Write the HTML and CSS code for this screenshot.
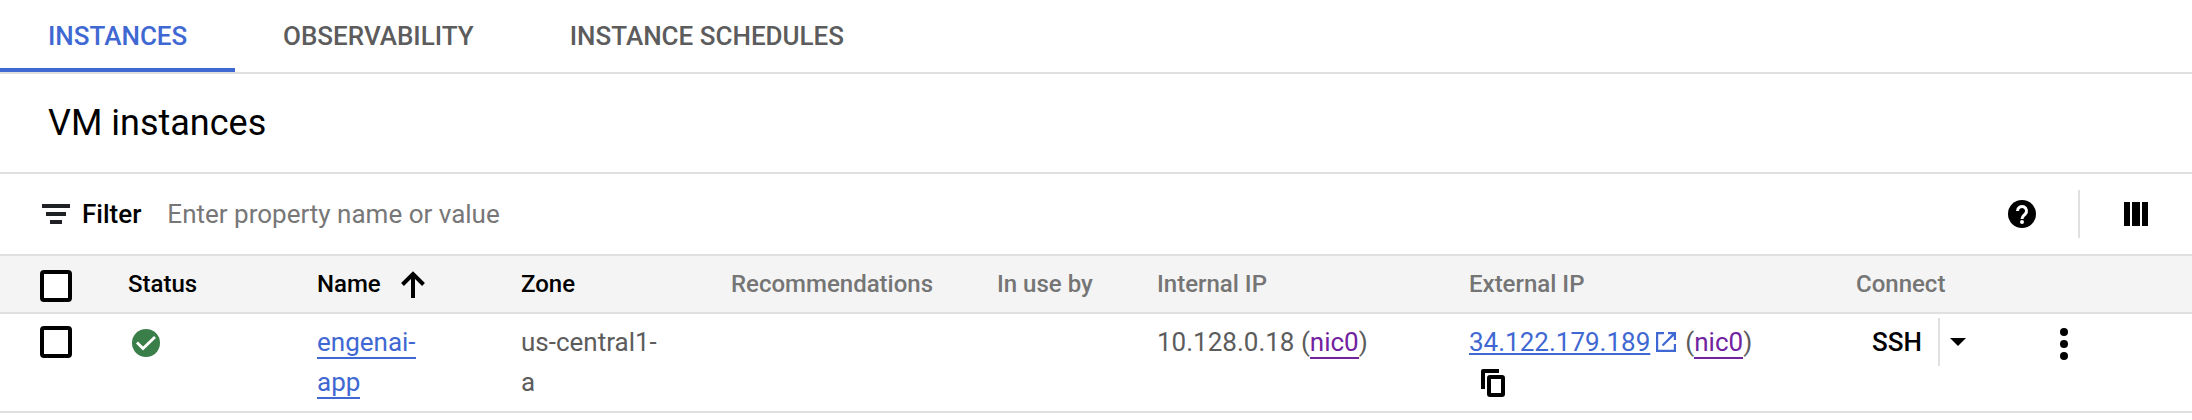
FILE: index.html
```html
<!DOCTYPE html>
<html lang="en">
<head>
<meta charset="utf-8">
<title>VM instances</title>
<link rel="stylesheet" href="styles.css">
</head>
<body>
<nav class="tabs">
  <a class="tab tab-active">INSTANCES</a>
  <a class="tab">OBSERVABILITY</a>
  <a class="tab">INSTANCE SCHEDULES</a>
</nav>
<header class="title-bar"><h1 class="title">VM instances</h1></header>
<section class="filter-bar">
  <svg class="filter-icon" width="28" height="20" viewBox="0 0 28 20"><path fill="#202124" d="M0 0h28v4H0zM4 8h20v4H4zM8 16h12v4H8z"/></svg>
  <span class="filter-label">Filter</span>
  <span class="filter-hint">Enter property name or value</span>
  <svg class="help" width="28" height="28" viewBox="0 0 28 28"><circle cx="14" cy="14" r="14"/><path fill="none" stroke="#fff" stroke-width="3" d="M9.500 11a4.500 4.500 0 1 1 7.700 3.100C15.300 16 14 16.500 14 19"/><circle cx="14" cy="22" r="2" fill="#fff"/></svg>
  <span class="divider"></span>
  <svg class="columns" width="24" height="24" viewBox="0 0 24 24"><path d="M0 0h6v24H0zM8 0h8v24H8zM18 0h6v24h-6z"/></svg>
</section>
<main class="table">
  <div class="row head">
    <div><span class="checkbox"></span></div>
    <div class="strong">Status</div>
    <div class="strong name-head">Name <svg class="sort" width="24" height="27" viewBox="0 0 24 27"><path fill="none" stroke="#000" stroke-width="4" d="M12 27V3M1.500 13.500 12 3l10.500 10.500"/></svg></div>
    <div class="strong">Zone</div>
    <div>Recommendations</div>
    <div>In use by</div>
    <div>Internal IP</div>
    <div>External IP</div>
    <div>Connect</div>
    <div></div>
  </div>
  <div class="row body">
    <div><span class="checkbox"></span></div>
    <div><svg class="status" width="28" height="28" viewBox="0 0 28 28"><circle cx="14" cy="14" r="14" fill="#3a7f4a"/><path fill="none" stroke="#fff" stroke-width="2.800" d="M5 13.500l6 6L23 8"/></svg></div>
    <div><a class="link">engenai-<br>app</a></div>
    <div>us-central1-<br>a</div>
    <div></div>
    <div></div>
    <div>10.128.0.18 (<a class="link visited">nic0</a>)</div>
    <div><a class="ip">34.122.179.189</a><svg class="open" width="20" height="20" viewBox="0 0 20 20"><path fill="none" stroke="#3f68d3" stroke-width="2.200" d="M8 1.100H1.100v17.800h17.800V12M12 1.100h6.900V8M18.900 1.100 6.500 13.500"/></svg>(<a class="link visited">nic0</a>)<br><svg class="copy" width="24" height="28" viewBox="0 0 24 28"><path d="M2 0h16v4H4v16H0V2a2 2 0 0 1 2-2z"/><rect x="8" y="8" width="14" height="18" rx="1" fill="none" stroke="#000" stroke-width="4"/></svg></div>
    <div class="connect"><span class="ssh">SSH</span><span class="divider"></span><svg class="caret" width="16" height="8" viewBox="0 0 16 8"><path d="M0 0h16L8 8z"/></svg></div>
    <div><svg class="more" width="8" height="32" viewBox="0 0 8 32"><circle cx="4" cy="4" r="4"/><circle cx="4" cy="16" r="4"/><circle cx="4" cy="28" r="4"/></svg></div>
  </div>
</main>
</body>
</html>
```

FILE: styles.css
```css
* { box-sizing: border-box; }
body {
  margin: 0;
  background: #fff;
  color: #000;
  font: 400 26px/40px Roboto, "Noto Sans", sans-serif;
}
svg { display: block; flex: none; }

.tabs { display: flex; height: 74px; border-bottom: 2px solid #e0e0e0; }
.tab {
  height: 72px;
  padding: 0 48px;
  color: #5c5c5c;
  font-weight: 500;
  line-height: 72px;
}
.tab-active { width: 235px; padding-right: 0; color: #3f68d3; border-bottom: 4px solid #3f68d3; }

.title-bar { height: 100px; padding-left: 48px; border-bottom: 2px solid #e0e0e0; }
.title { margin: 0; font-size: 36px; font-weight: 400; line-height: 98px; }

.filter-bar {
  display: flex;
  align-items: center;
  height: 82px;
  padding: 0 44px 0 42px;
  border-bottom: 2px solid #e0e0e0;
}
.filter-label { margin-left: 12px; font-weight: 500; }
.filter-hint { margin-left: 26px; color: #777; }
.help { margin-left: auto; margin-right: 42px; }
.divider { flex: none; width: 2px; height: 48px; background: #e0e0e0; }
.columns { margin-left: 44px; }

.row {
  display: grid;
  grid-template-columns: 88px 189px 204px 210px 266px 160px 312px 387px 204px auto;
  padding-left: 40px;
  border-bottom: 2px solid #e0e0e0;
}
.head {
  height: 58px;
  background: #f4f4f4;
  color: #757575;
  font-size: 24px;
  font-weight: 500;
  line-height: 56px;
}
.strong { color: #000; }
.checkbox {
  display: block;
  width: 32px;
  height: 32px;
  border: 4px solid #000;
  border-radius: 4px;
  background: #fff;
}
.head .checkbox { margin-top: 14px; }
.name-head { display: flex; }
.sort { margin: 15px 0 0 20px; }

.body { height: 99px; padding-top: 8px; color: #5c5c5c; }
.body .checkbox { margin-top: 4px; }
.status { margin: 7px 0 0 4px; }
.link { color: #3f68d3; border-bottom: 2px solid #3f68d3; }
.visited { color: #7122a0; border-color: #7122a0; }
.ip {
  color: #3f68d3;
  text-decoration: underline;
  text-decoration-thickness: 2px;
  text-underline-offset: 2px;
}
.open { display: inline-block; margin: 0 9px 0 6px; vertical-align: -1px; }
.copy { margin: 7px 0 0 12px; }
.connect { display: flex; height: 48px; margin-top: -4px; padding-left: 16px; color: #000; }
.ssh { width: 66px; font-weight: 500; line-height: 48px; }
.caret { margin: 20px 0 0 10px; }
.more { margin-top: 6px; }
```
